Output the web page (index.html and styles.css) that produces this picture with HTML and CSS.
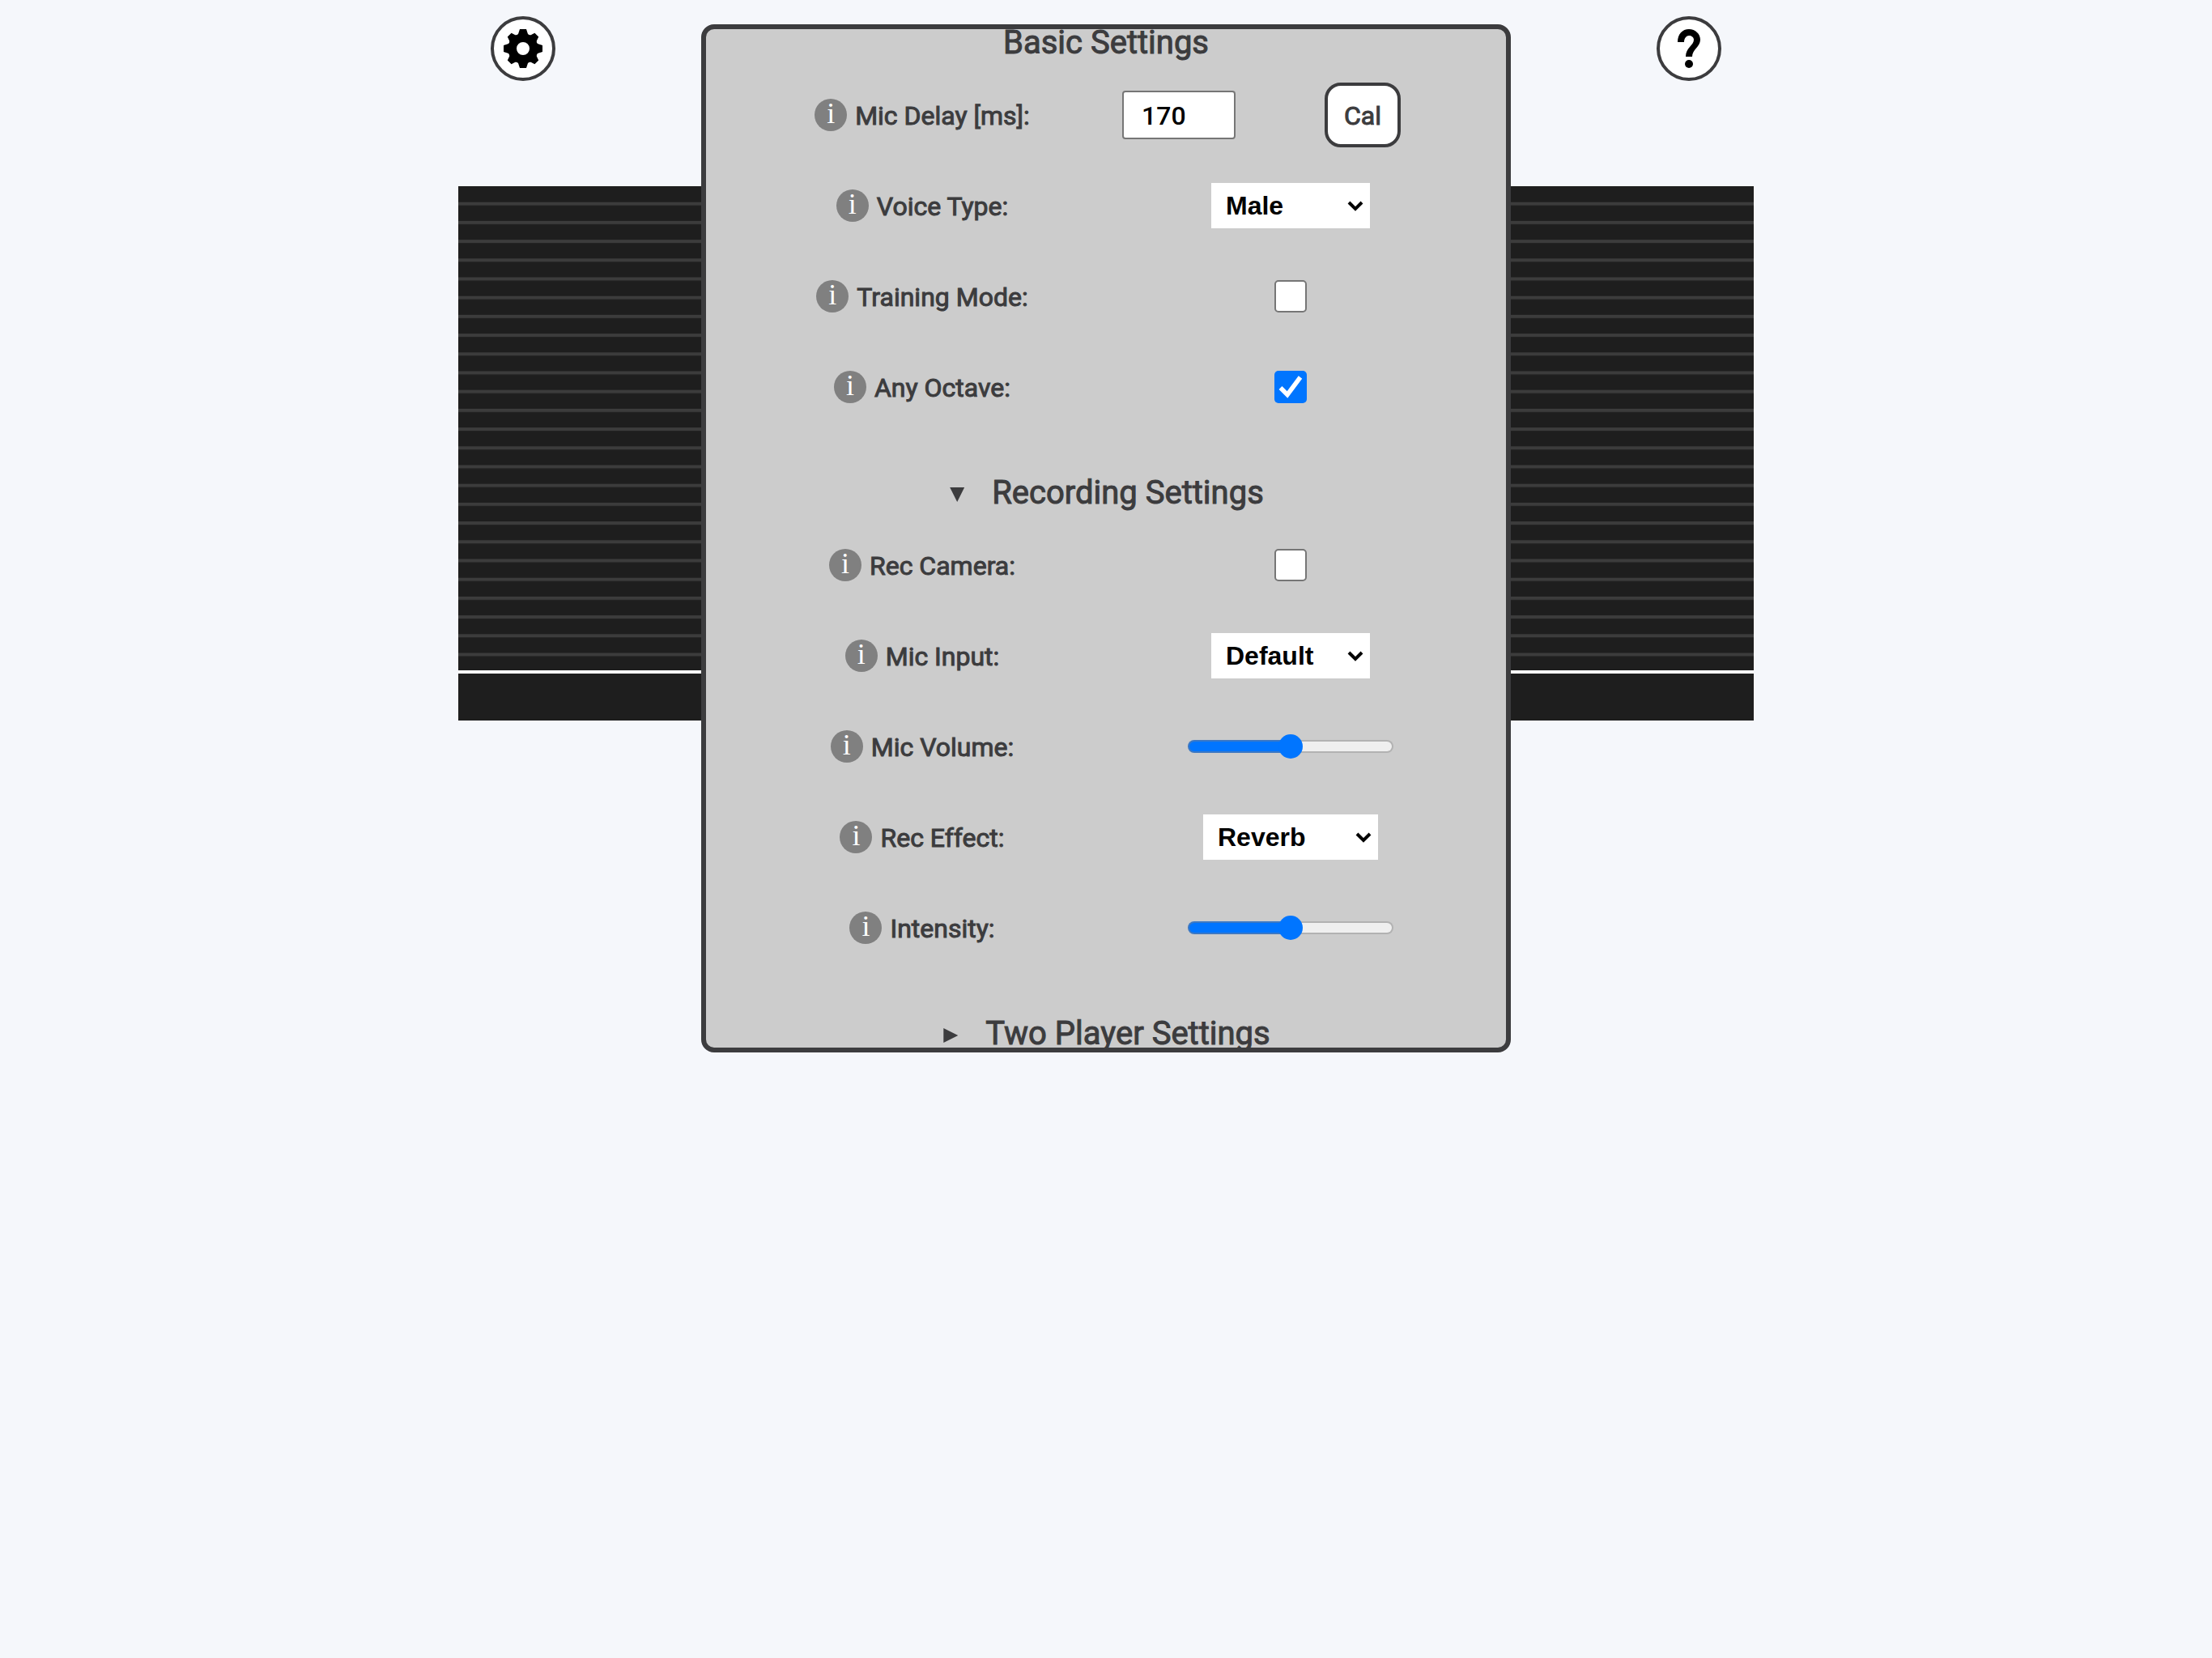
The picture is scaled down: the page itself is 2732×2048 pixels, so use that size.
FILE: index.html
```html
<!DOCTYPE html>
<html lang="en">
<head>
<meta charset="utf-8">
<meta name="viewport" content="width=device-width, initial-scale=1">
<title>Settings</title>
<link rel="stylesheet" href="styles.css">
</head>
<body>
<main class="stage">
  <header class="toolbar">
    <button class="round-button" type="button" aria-label="Settings">
      <svg class="round-icon" viewBox="0 0 24 24" aria-hidden="true"><path d="M10 0h4l1 3q.8.8 1.800.6l2.400-1.200 2.400 2.400-1.200 2.400q-.2 1 .6 1.800l3 1v4l-3 1q-.8.8-.6 1.800l1.200 2.400-2.400 2.400-2.400-1.200q-1-.2-1.800.6l-1 3h-4l-1-3q-.8-.8-1.800-.6l-2.400 1.200-2.400-2.400 1.200-2.400q.2-1-.6-1.800l-3-1v-4l3-1q.8-.8.6-1.800L2.400 4.800 4.800 2.400 7.200 3.600q1 .2 1.800-.6ZM12 8a4 4 0 1 0 0 8a4 4 0 0 0 0-8Z" fill-rule="evenodd"/></svg>
    </button>
    <button class="round-button" type="button" aria-label="Help">
      <svg class="round-icon" viewBox="0 0 48 48" aria-hidden="true"><path d="M10 16C10 6 16 0 24 0s14 6 14 13c0 9-10 12-10 21h-8c0-11 10-14 10-21 0-3-3-5-6-5s-6 3-6 8Z"/><circle cx="24" cy="43" r="5"/></svg>
    </button>
  </header>

  <svg class="notes" viewBox="0 0 1600 660" preserveAspectRatio="none" aria-hidden="true">
    <defs>
      <pattern id="staff" y="19.700" width="1600" height="23.200" patternUnits="userSpaceOnUse">
        <rect width="1600" height="4" fill="#3c3c3c"/>
      </pattern>
    </defs>
    <rect width="1600" height="660" fill="#1e1e1e"/>
    <rect y="19" width="1600" height="570" fill="url(#staff)"/>
    <rect y="598" width="1600" height="4" fill="#fff"/>
  </svg>

  <section class="panel" aria-label="Settings">
    <h2 class="title title-first">Basic Settings</h2>
    <div class="row">
      <div class="name"><span class="info">i</span><label for="delay">Mic Delay [ms]:</label></div>
      <div class="field field-pair">
        <input class="number" id="delay" type="text" inputmode="numeric" value="170">
        <button class="cal" type="button">Cal</button>
      </div>
    </div>
    <div class="row">
      <div class="name"><span class="info">i</span><label for="voice">Voice Type:</label></div>
      <div class="field"><select class="select" id="voice"><option>Male</option><option>Female</option></select></div>
    </div>
    <div class="row">
      <div class="name"><span class="info">i</span><label for="training">Training Mode:</label></div>
      <div class="field"><input class="check" id="training" type="checkbox"></div>
    </div>
    <div class="row">
      <div class="name"><span class="info">i</span><label for="octave">Any Octave:</label></div>
      <div class="field"><input class="check" id="octave" type="checkbox" checked></div>
    </div>

    <details open>
      <summary class="title">Recording Settings</summary>
      <div class="row">
        <div class="name"><span class="info">i</span><label for="camera">Rec Camera:</label></div>
        <div class="field"><input class="check" id="camera" type="checkbox"></div>
      </div>
      <div class="row">
        <div class="name"><span class="info">i</span><label for="mic">Mic Input:</label></div>
        <div class="field"><select class="select" id="mic"><option>Default</option></select></div>
      </div>
      <div class="row">
        <div class="name"><span class="info">i</span><label for="volume">Mic Volume:</label></div>
        <div class="field"><input class="slider" id="volume" type="range" value="50"></div>
      </div>
      <div class="row">
        <div class="name"><span class="info">i</span><label for="effect">Rec Effect:</label></div>
        <div class="field"><select class="select select-wide" id="effect"><option>Reverb</option></select></div>
      </div>
      <div class="row">
        <div class="name"><span class="info">i</span><label for="intensity">Intensity:</label></div>
        <div class="field"><input class="slider" id="intensity" type="range" value="50"></div>
      </div>
    </details>

    <details>
      <summary class="title">Two Player Settings</summary>
    </details>
  </section>
</main>
</body>
</html>
```
FILE: styles.css
```css
* {
  box-sizing: border-box;
}

body {
  margin: 0;
  background: #f5f7fb;
  color: #3c3c3e;
  font: 400 32px/40px Roboto, sans-serif;
}

.stage {
  position: relative;
  max-width: 1600px;
  min-height: 100vh;
  margin: 0 auto;
}

.toolbar {
  display: flex;
  justify-content: space-between;
  padding: 20px 40px 130px;
}

.round-button {
  display: grid;
  place-items: center;
  width: 80px;
  height: 80px;
  padding: 0;
  border: 4px solid #3c3c3e;
  border-radius: 50%;
  background: #fff;
}

.round-icon {
  width: 48px;
  height: 48px;
  fill: #000;
}

.notes {
  display: block;
  width: 100%;
  height: 660px;
}

/* The panel lies over the note display. */
.panel {
  position: absolute;
  top: 30px;
  left: 50%;
  width: 100%;
  max-width: 1000px;
  max-height: 1270px;
  padding: 0 38px;
  border: 6px solid #3c3c3e;
  border-radius: 16px;
  background: #ccc;
  transform: translateX(-50%);
  overflow: hidden;
  -webkit-text-stroke: 1px currentColor;
}

.title {
  display: flex;
  align-items: center;
  justify-content: center;
  gap: 34px;
  margin: 0;
  padding: 51px 0 9px 2px;
  font-size: 40px;
  font-weight: 400;
  line-height: 48px;
  list-style: none;
}

.title-first {
  padding: 0 0 16px;
  line-height: 34px;
}

summary::before {
  content: "";
  width: 18px;
  height: 18px;
  margin-top: 4px;
  background: currentColor;
  clip-path: polygon(0 0, 100% 50%, 0 100%);
}

details[open] > summary::before {
  clip-path: polygon(0 0, 100% 0, 50% 100%);
}

.row {
  display: grid;
  grid-template-columns: 1fr 1fr;
  align-items: center;
  height: 112px;
}

.name,
.field {
  display: flex;
  align-items: center;
  justify-content: center;
}

.name {
  gap: 10px;
  padding-left: 2px;
}

.name label {
  padding-top: 2px;
}

.info {
  width: 40px;
  height: 40px;
  border-radius: 50%;
  background: #808080;
  color: #fff;
  font-family: "Liberation Serif", serif;
  font-size: 36px;
  line-height: 36px;
  text-align: center;
  -webkit-text-stroke: 0;
}

.field-pair {
  gap: 110px;
  padding-right: 72px;
}

.number {
  width: 140px;
  height: 60px;
  padding: 2px 22px 0;
  border: 2px solid #767676;
  border-radius: 4px;
  background: #fff;
  color: #000;
  font: 500 32px/40px Roboto, sans-serif;
  -webkit-text-stroke: 0;
}

.cal {
  width: 94px;
  height: 80px;
  padding: 2px 0 0;
  border: 4px solid #3c3c3e;
  border-radius: 20px;
  background: #fff;
  color: #3c3c3e;
  font: inherit;
  -webkit-text-stroke: 1px currentColor;
}

.select {
  appearance: none;
  width: 196px;
  height: 56px;
  padding: 0 18px;
  border: 0;
  border-radius: 0;
  background: #fff url("data:image/svg+xml,%3Csvg xmlns='http://www.w3.org/2000/svg' viewBox='0 0 20 14'%3E%3Cpath d='M2 3l8 8 8-8' fill='none' stroke='%23000' stroke-width='4'/%3E%3C/svg%3E") right 8px center / 20px 14px no-repeat;
  color: #000;
  font: 700 32px/40px "Liberation Sans", sans-serif;
  -webkit-text-stroke: 0;
}

.select-wide {
  width: 216px;
}

.check {
  appearance: none;
  width: 40px;
  height: 40px;
  margin: 0;
  border: 2px solid #767676;
  border-radius: 5px;
  background: #fff;
}

.check:checked {
  border: 0;
  background: #0075ff url("data:image/svg+xml,%3Csvg xmlns='http://www.w3.org/2000/svg' viewBox='0 0 40 40'%3E%3Cpath d='M7.500 21l8.500 8.500L32 8' fill='none' stroke='%23fff' stroke-width='5.500'/%3E%3C/svg%3E") center / 40px 40px no-repeat;
}

.slider {
  appearance: none;
  width: 254px;
  height: 32px;
  margin: 0;
  background: none;
}

.slider::-webkit-slider-runnable-track {
  height: 16px;
  border: 2px solid transparent;
  border-radius: 8px;
  background:
    linear-gradient(90deg, #0075ff 50%, #efefef 50%) padding-box,
    linear-gradient(90deg, #3b78c4 50%, #b2b2b2 50%) border-box;
}

.slider::-webkit-slider-thumb {
  appearance: none;
  width: 30px;
  height: 30px;
  margin-top: -9px;
  border-radius: 50%;
  background: #0075ff;
}
```
